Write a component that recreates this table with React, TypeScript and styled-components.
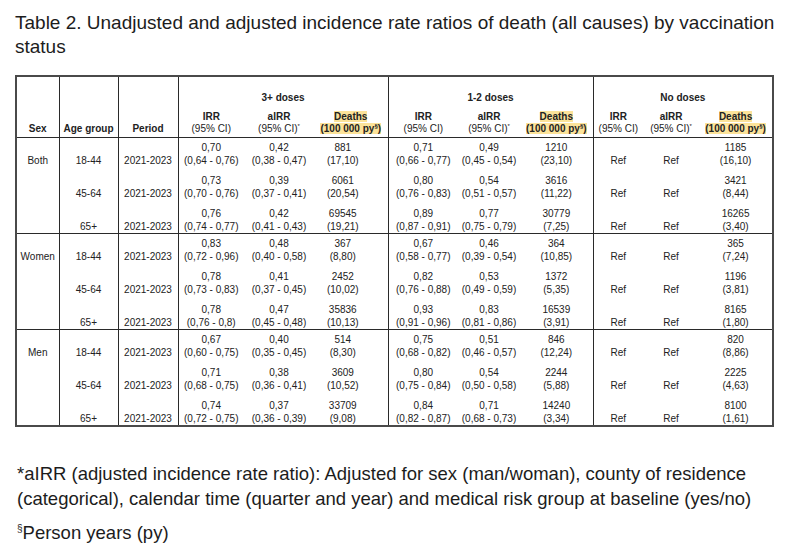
import React from "react";
import styled, { createGlobalStyle } from "styled-components";

const Global = createGlobalStyle`
  html, body { margin: 0; padding: 0; background: #ffffff; }
  body { font-family: "Liberation Sans", Arial, sans-serif; color: #1c1c1c; }
`;

const Page = styled.div`
  width: 800px;
  height: 557px;
  box-sizing: border-box;
  padding: 11px 15px 0 15px;
  overflow: hidden;
`;

const Title = styled.h1`
  margin: 0;
  font-size: 19px;
  font-weight: normal;
  line-height: 24px;
  color: #1c1c1c;
  width: 775px;
`;

const Table = styled.table`
  margin-top: 16px;
  width: 757px;
  table-layout: fixed;
  border-collapse: collapse;
  border: 2px solid #4a4a4a;
  font-size: 10px;
  color: #222;
`;

const HeadCell = styled.th<{ $divider?: boolean; $pt?: number }>`
  font-weight: bold;
  text-align: center;
  vertical-align: bottom;
  padding: ${(p) => p.$pt ?? 0}px 0 2px;
  line-height: 12px;
  white-space: nowrap;
  border-right: ${(p) => (p.$divider ? "1px solid #2a2a2a" : "none")};
`;

const SubLabel = styled.span`
  font-weight: normal;
`;

const Mark = styled.span`
  background: #fce39a;
`;

const Sup = styled.sup`
  font-size: 6px;
  line-height: 0;
  vertical-align: 4px;
`;

const HeadRow = styled.tr`
  border-bottom: 1px solid #2a2a2a;
`;

const BodyRow = styled.tr<{ $groupStart?: boolean }>`
  border-top: ${(p) => (p.$groupStart ? "1px solid #2a2a2a" : "none")};
`;

const Cell = styled.td<{ $divider?: boolean; $first?: boolean; $shift?: number }>`
  text-align: center;
  vertical-align: bottom;
  padding: ${(p) => (p.$first ? 3 : 7)}px ${(p) => p.$shift ?? 0}px 0 0;
  line-height: 13px;
  white-space: nowrap;
  border-right: ${(p) => (p.$divider ? "1px solid #2a2a2a" : "none")};
`;

const Line = styled.div`
  height: 13px;
`;

const Notes = styled.div`
  margin-top: 34px;
  padding-left: 2px;
  font-size: 18.5px;
  line-height: 25px;
  color: #1c1c1c;
`;

const Note = styled.p`
  margin: 0 0 9px;
`;

const NoteSup = styled.sup`
  font-size: 10px;
  line-height: 0;
  vertical-align: 7px;
`;

type Pair = [string, string];
type Row = {
  age: string;
  cells: Pair[];
  none: Pair;
};

const groups: { sex: string; rows: Row[] }[] = [
  {
    sex: "Both",
    rows: [
      { age: "18-44", cells: [["0,70", "(0,64 - 0,76)"], ["0,42", "(0,38 - 0,47)"], ["881", "(17,10)"], ["0,71", "(0,66 - 0,77)"], ["0,49", "(0,45 - 0,54)"], ["1210", "(23,10)"]], none: ["1185", "(16,10)"] },
      { age: "45-64", cells: [["0,73", "(0,70 - 0,76)"], ["0,39", "(0,37 - 0,41)"], ["6061", "(20,54)"], ["0,80", "(0,76 - 0,83)"], ["0,54", "(0,51 - 0,57)"], ["3616", "(11,22)"]], none: ["3421", "(8,44)"] },
      { age: "65+", cells: [["0,76", "(0,74 - 0,77)"], ["0,42", "(0,41 - 0,43)"], ["69545", "(19,21)"], ["0,89", "(0,87 - 0,91)"], ["0,77", "(0,75 - 0,79)"], ["30779", "(7,25)"]], none: ["16265", "(3,40)"] },
    ],
  },
  {
    sex: "Women",
    rows: [
      { age: "18-44", cells: [["0,83", "(0,72 - 0,96)"], ["0,48", "(0,40 - 0,58)"], ["367", "(8,80)"], ["0,67", "(0,58 - 0,77)"], ["0,46", "(0,39 - 0,54)"], ["364", "(10,85)"]], none: ["365", "(7,24)"] },
      { age: "45-64", cells: [["0,78", "(0,73 - 0,83)"], ["0,41", "(0,37 - 0,45)"], ["2452", "(10,02)"], ["0,82", "(0,76 - 0,88)"], ["0,53", "(0,49 - 0,59)"], ["1372", "(5,35)"]], none: ["1196", "(3,81)"] },
      { age: "65+", cells: [["0,78", "(0,76 - 0,8)"], ["0,47", "(0,45 - 0,48)"], ["35836", "(10,13)"], ["0,93", "(0,91 - 0,96)"], ["0,83", "(0,81 - 0,86)"], ["16539", "(3,91)"]], none: ["8165", "(1,80)"] },
    ],
  },
  {
    sex: "Men",
    rows: [
      { age: "18-44", cells: [["0,67", "(0,60 - 0,75)"], ["0,40", "(0,35 - 0,45)"], ["514", "(8,30)"], ["0,75", "(0,68 - 0,82)"], ["0,51", "(0,46 - 0,57)"], ["846", "(12,24)"]], none: ["820", "(8,86)"] },
      { age: "45-64", cells: [["0,71", "(0,68 - 0,75)"], ["0,38", "(0,36 - 0,41)"], ["3609", "(10,52)"], ["0,80", "(0,75 - 0,84)"], ["0,54", "(0,50 - 0,58)"], ["2244", "(5,88)"]], none: ["2225", "(4,63)"] },
      { age: "65+", cells: [["0,74", "(0,72 - 0,75)"], ["0,37", "(0,36 - 0,39)"], ["33709", "(9,08)"], ["0,84", "(0,82 - 0,87)"], ["0,71", "(0,68 - 0,73)"], ["14240", "(3,34)"]], none: ["8100", "(1,61)"] },
    ],
  },
];

const widths = [43, 59, 60, 66, 70, 74, 70, 62, 73, 50, 56, 74];

const SubHeads = () => (
  <>
    <HeadCell $pt={5}>
      IRR
      <br />
      <SubLabel>(95% CI)</SubLabel>
    </HeadCell>
    <HeadCell $pt={5}>
      aIRR
      <br />
      <SubLabel>
        (95% CI)<Sup>*</Sup>
      </SubLabel>
    </HeadCell>
  </>
);

const DeathsHead = ({ divider }: { divider?: boolean }) => (
  <HeadCell $divider={divider} $pt={5}>
    <Mark>Deaths</Mark>
    <br />
    <Mark>
      (100 000 py<Sup>§</Sup>)
    </Mark>
  </HeadCell>
);

const PairCell = ({ v, first, divider, shift }: { v: Pair; first: boolean; divider?: boolean; shift?: number }) => (
  <Cell $first={first} $divider={divider} $shift={shift}>
    <Line>{v[0]}</Line>
    <Line>{v[1]}</Line>
  </Cell>
);

export default function App() {
  return (
    <Page>
      <Global />
      <Title>
        Table 2. Unadjusted and adjusted incidence rate ratios of death (all causes) by vaccination status
      </Title>
      <Table>
        <colgroup>
          {widths.map((w, i) => (
            <col key={i} style={{ width: w }} />
          ))}
        </colgroup>
        <thead>
          <tr>
            <HeadCell rowSpan={2} $divider>Sex</HeadCell>
            <HeadCell rowSpan={2} $divider>Age group</HeadCell>
            <HeadCell rowSpan={2} $divider>Period</HeadCell>
            <HeadCell colSpan={3} $divider $pt={15}>3+ doses</HeadCell>
            <HeadCell colSpan={3} $divider $pt={15}>1-2 doses</HeadCell>
            <HeadCell colSpan={3} $pt={15}>No doses</HeadCell>
          </tr>
          <HeadRow>
            <SubHeads />
            <DeathsHead divider />
            <SubHeads />
            <DeathsHead divider />
            <SubHeads />
            <DeathsHead />
          </HeadRow>
        </thead>
        <tbody>
          {groups.map((g) =>
            g.rows.map((r, i) => {
              const first = i === 0;
              return (
                <BodyRow key={g.sex + r.age} $groupStart={first}>
                  <Cell $first={first} $divider>
                    <Line>{first ? g.sex : ""}</Line>
                  </Cell>
                  <Cell $first={first} $divider>
                    <Line>{r.age}</Line>
                  </Cell>
                  <Cell $first={first} $divider>
                    <Line>2021-2023</Line>
                  </Cell>
                  <PairCell v={r.cells[0]} first={first} />
                  <PairCell v={r.cells[1]} first={first} />
                  <PairCell v={r.cells[2]} first={first} divider shift={16} />
                  <PairCell v={r.cells[3]} first={first} />
                  <PairCell v={r.cells[4]} first={first} />
                  <PairCell v={r.cells[5]} first={first} divider />
                  <Cell $first={first}>
                    <Line>Ref</Line>
                  </Cell>
                  <Cell $first={first}>
                    <Line>Ref</Line>
                  </Cell>
                  <PairCell v={r.none} first={first} />
                </BodyRow>
              );
            })
          )}
        </tbody>
      </Table>
      <Notes>
        <Note>
          *aIRR (adjusted incidence rate ratio): Adjusted for sex (man/woman), county of residence (categorical), calendar time
          (quarter and year) and medical risk group at baseline (yes/no)
        </Note>
        <Note>
          <NoteSup>§</NoteSup>Person years (py)
        </Note>
      </Notes>
    </Page>
  );
}
